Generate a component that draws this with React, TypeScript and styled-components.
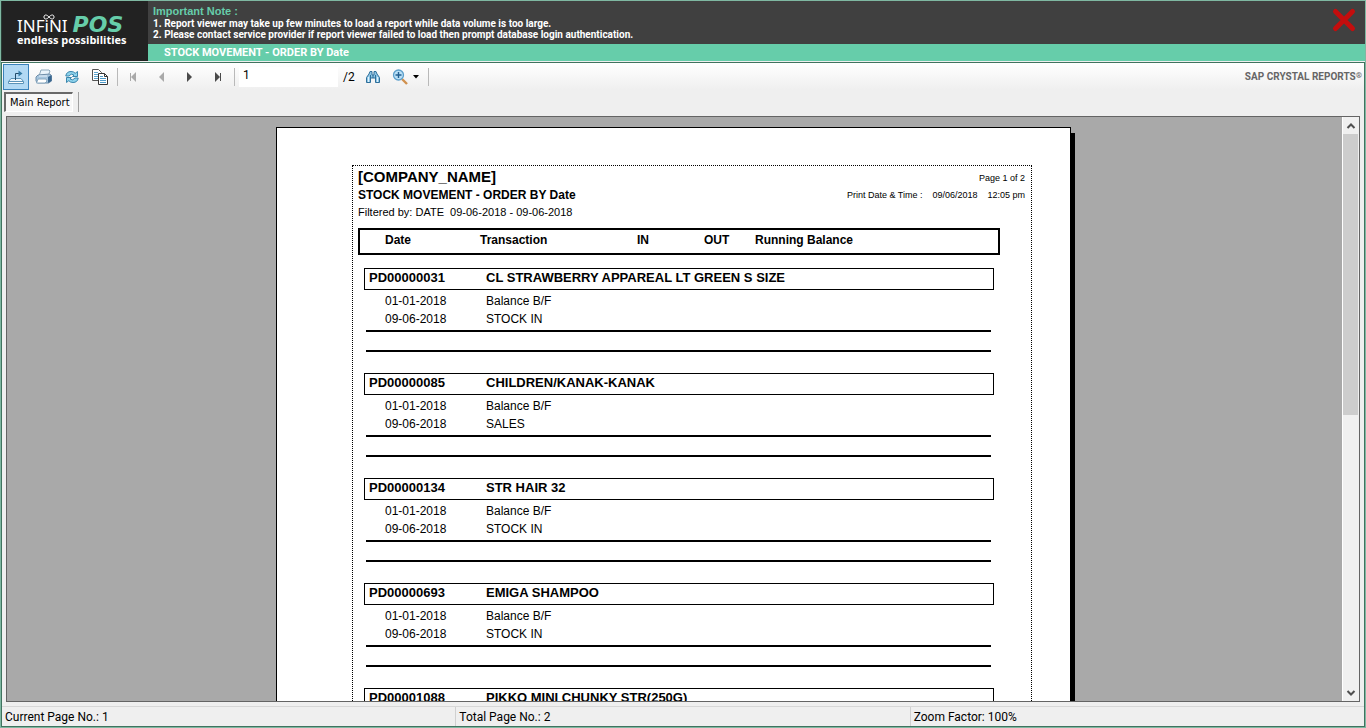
import React from "react";
import styled, { createGlobalStyle } from "styled-components";

const GlobalStyle = createGlobalStyle`
  *, *::before, *::after { box-sizing: border-box; }
  html, body, #root { height: 100%; }
  body { margin: 0; overflow: hidden; }
  button { font: inherit; }
`;

const sans = `"Liberation Sans", Arial, sans-serif`;
const uiFont = `Roboto, "Segoe UI", sans-serif`;

const Window = styled.div`
  display: flex;
  flex-direction: column;
  height: 100vh;
  background: #efefef;
  border: 1px solid #7fb8a2;
  color: #000;
  font-family: ${sans};
`;

/* ---------- banner ---------- */

const Banner = styled.header`
  display: flex;
  height: 60px;
  flex: none;
  background: #404040;
  border-left: 1px solid #2a3d36;
`;

const Logo = styled.div`
  width: 146px;
  flex: none;
  background: #222;
  color: #fff;
  padding: 15px 0 0 15px;
`;

const LogoTop = styled.div`
  position: relative;
  display: flex;
  align-items: baseline;
  gap: 5px;
  height: 17px;
`;

const LogoName = styled.span`
  font: 17px/17px "Noto Sans", sans-serif;
`;

const LogoPos = styled.span`
  font: italic bold 22px/17px "DejaVu Sans", sans-serif;
  color: #66cdaa;
`;

const LogoLoop = styled.svg`
  position: absolute;
  left: 26px;
  top: -2px;
`;

const LogoTag = styled.div`
  font: bold 11px/13px "Open Sans", sans-serif;
`;

const BannerBody = styled.div`
  flex: 1;
  display: flex;
  flex-direction: column;
  color: #fff;
`;

const Notes = styled.div`
  flex: 1;
  position: relative;
  padding: 4px 5px 0;
`;

const NoteTitle = styled.h2`
  margin: 0;
  font: bold 11px/13px ${sans};
  color: #66cdaa;
`;

const NoteList = styled.ol`
  margin: 0;
  padding: 0;
  list-style-position: inside;
  font: bold 10px/11px ${uiFont};
`;

const CloseButton = styled.button`
  position: absolute;
  top: 5px;
  right: 7px;
  width: 28px;
  height: 28px;
  padding: 0;
  border: 0;
  background: none;
`;

const ReportTitle = styled.h1`
  margin: 0;
  padding-left: 16px;
  height: 17px;
  background: #66cdaa;
  font: bold 11px/18px ${uiFont};
`;

/* ---------- toolbar ---------- */

const Shell = styled.main`
  flex: 1;
  min-height: 0;
  display: flex;
  flex-direction: column;
  margin-top: 1px;
  border: 1px solid #40735f;
`;

const Toolbar = styled.div`
  display: flex;
  align-items: center;
  gap: 2px;
  flex: none;
  height: 27px;
  padding: 0 2px 0 1px;
  background: linear-gradient(#fff, #efefef);
`;

const ToolButton = styled.button<{ $active?: boolean; $wide?: boolean }>`
  display: flex;
  align-items: center;
  justify-content: center;
  gap: 5px;
  width: ${(p) => (p.$wide ? 36 : 26)}px;
  height: 26px;
  padding: 0;
  border: 1px solid ${(p) => (p.$active ? "#3a82bb" : "transparent")};
  background: ${(p) => (p.$active ? "#b2d9f4" : "transparent")};
  svg { display: block; flex: none; }
`;

const Separator = styled.span`
  width: 1px;
  height: 18px;
  margin-left: 2px;
  background: #b9b9b9;
`;

const PageBox = styled.label`
  display: flex;
  align-items: center;
  gap: 5px;
  margin: 0 3px 0 2px;
  font: 12px/20px ${uiFont};
`;

const PageInput = styled.input`
  width: 99px;
  height: 20px;
  padding: 0 4px 3px;
  border: 0;
  background: #fff;
  font: 12px/16px ${uiFont};
`;

const Brand = styled.span`
  margin-left: auto;
  font: bold 10px/16px ${uiFont};
  color: #666;
  sup { font-size: 8px; line-height: 8px; vertical-align: 2px; }
`;

const Tabs = styled.div`
  display: flex;
  align-items: center;
  gap: 5px;
  flex: none;
  height: 26px;
  padding: 2px 0 4px 2px;
`;

const Tab = styled.button`
  height: 20px;
  width: 69px;
  padding: 0 0 0 4px;
  border: 1px solid;
  border-width: 2px 1px 1px 2px;
  border-color: #696969 #fff #fff #696969;
  background: #f7f7f7;
  font: 11px/16px "DejaVu Sans Condensed", "DejaVu Sans", sans-serif;
  text-align: left;
  white-space: nowrap;
`;

const TabRule = styled.span`
  width: 1px;
  height: 20px;
  background: #a0a0a0;
`;

/* ---------- report canvas ---------- */

const Viewer = styled.div`
  flex: 1;
  min-height: 0;
  display: flex;
  margin: 0 4px;
  border: 1px solid #646464;
  background: #a9a9a9;
`;

const Canvas = styled.div`
  flex: 1;
  min-width: 0;
  overflow: hidden;
  padding: 10px 2px 0 0;
`;

const Paper = styled.article`
  width: 795px;
  margin: 0 auto;
  padding: 37px 38px 37px 75px;
  border: 1px solid #000;
  background: #fff;
  box-shadow: 4px 6px 0 #000;
`;

const PrintArea = styled.div`
  min-height: 1000px;
  padding: 2px 5px;
  border: 1px dotted #000;
`;

const ReportHead = styled.div`
  display: flex;
  justify-content: space-between;
  height: 60px;
`;

const Company = styled.h3`
  margin: 0;
  font: bold 15px/18px ${sans};
`;

const HeadTitle = styled.p`
  margin: 0;
  font: bold 12px/18px ${sans};
`;

const Filter = styled.p`
  margin: 0;
  font: 11px/17px ${sans};
  white-space: pre;
`;

const PrintInfo = styled.div`
  padding: 2px 1px 0 0;
  font: 9px/17px ${sans};
  text-align: right;
`;

const PrintStamp = styled.div`
  display: flex;
  gap: 10px;
`;

const Report = styled.table`
  display: block;
  width: 642px;
  border-collapse: collapse;
  font-family: ${sans};
  thead, tbody { display: block; }
  th, td { padding: 0; text-align: left; }
`;

const HeaderRow = styled.tr`
  display: grid;
  grid-template-columns: 95px 157px 67px 51px 1fr;
  height: 27px;
  padding-left: 25px;
  margin-bottom: 13px;
  border: 2px solid #000;
  font: 12px/20px ${sans};
`;

const Group = styled.tbody`
  margin: 0 6px 21px;
`;

const ItemRow = styled.tr`
  display: grid;
  grid-template-columns: 117px 1fr;
  height: 22px;
  padding-left: 4px;
  margin-bottom: 2px;
  border: 1px solid #000;
  font: 13px/18px ${sans};
`;

const EntryRow = styled.tr`
  display: grid;
  grid-template-columns: 101px 1fr;
  height: 18px;
  padding-left: 21px;
  font: 12px/18px ${sans};
`;

const TotalRow = styled.tr`
  display: block;
  height: 22px;
  margin: 2px 3px 0 2px;
  border: solid #000;
  border-width: 2px 0;
`;

/* ---------- scrollbar and status ---------- */

const ScrollTrack = styled.div`
  display: flex;
  flex-direction: column;
  width: 17px;
  flex: none;
  border-left: 1px solid #fff;
  background: #f0f0f0;
`;

const ScrollButton = styled.button`
  display: grid;
  place-items: center;
  height: 17px;
  flex: none;
  padding: 0;
  border: 0;
  background: none;
`;

const ScrollRun = styled.div`
  flex: 1;
`;

const Thumb = styled.div`
  height: 51%;
  margin-right: 1px;
  background: #cdcdcd;
`;

const StatusBar = styled.footer`
  display: flex;
  flex: none;
  height: 20px;
  margin-top: 4px;
  border-top: 1px solid #d7d7d7;
`;

const StatusCell = styled.span`
  flex: 1;
  padding-left: 3px;
  font: 12px/20px ${uiFont};
  & + & { border-left: 1px solid #d0d0d0; }
`;

/* ---------- icons ---------- */

const ExportIcon = () => (
  <svg width="18" height="16" viewBox="0 0 18 16" fill="none">
    <path d="M4 9.500h10l2.500 3H1.500z" fill="#eaf5fc" stroke="#5b93b8" />
    <path d="M1.500 12.500h15v2h-15z" fill="#fff" stroke="#5b93b8" />
    <path d="M8.500 11V4.500h4" stroke="#234a68" />
    <path d="M11.500 1.500l4 3-4 3z" fill="#347aa5" />
  </svg>
);

const PrinterIcon = () => (
  <svg width="18" height="16" viewBox="0 0 18 16">
    <path d="M6 1h8l1 1-2 5H4z" fill="#eaf4fb" stroke="#8ba7bb" />
    <path d="M3 6l12-1 1.500 2v5l-3 2H2.500L1 12V8z" fill="#a6c5de" stroke="#6f8ea9" />
    <path d="M13 8l3.500-2v6L13 14z" fill="#38668f" />
    <path d="M3 10h8l1 2-2 2H1.500z" fill="#fff" stroke="#88a8c0" />
    <path d="M4 7h8" stroke="#e9f3fa" />
  </svg>
);

const RefreshIcon = () => (
  <svg width="14" height="14" viewBox="0 0 14 14" fill="#8ed3ec" stroke="#3a86ad">
    <path d="M.8 6Q1.500 1.500 6 1.500q2.800 0 4.200 1.800L12.500 1.500v5h-5L9 5Q6 2.800 4 6z" />
    <path d="M13.200 8Q12.500 12.500 8 12.500q-2.800 0-4.200-1.800L1.500 12.500v-5h5L5 9q3 2.200 5-1z" />
  </svg>
);

const CopyIcon = () => (
  <svg width="18" height="18" viewBox="0 0 18 18">
    <path d="M1.500 1.500h6l3 3v8h-9z" fill="#fff" stroke="#555" />
    <path d="M3 4.500h4M3 6.500h5M3 8.500h5M3 10.500h4" stroke="#5da5cf" />
    <path d="M7.500 5.500h6l3 3v8h-9z" fill="#fff" stroke="#333" />
    <path d="M13.500 5.500v3h3" fill="none" stroke="#333" />
    <path d="M9 8.500h3M9 10.500h6M9 12.500h6M9 14.500h6" stroke="#4e9ac8" />
  </svg>
);

const NavIcon = ({ back, edge }: { back?: boolean; edge?: boolean }) => (
  <svg width="10" height="10" viewBox="0 0 10 10" fill={back ? "#a9a9a9" : "#4a4a4a"}>
    {back ? <path d="M8 0v10L3 5z" /> : <path d="M3 0v10l5-5z" />}
    {edge && <path d={back ? "M2 1h1v8H2z" : "M8 1h1v8H8z"} />}
  </svg>
);

const FindIcon = () => (
  <svg width="16" height="14" viewBox="0 0 16 14" fill="#8fc6e6" stroke="#2f6f9a">
    <path d="M4 4L5 1.500h2V5h2V1.500h2L12 4l2.500 3.500v5h-4V8h-5v4.500h-4v-5z" />
    <path d="M3.500 7v5M12.500 7v5" stroke="#e2f2fb" />
    <path d="M5.500 5v4M10.500 5v4M8 5v3" />
  </svg>
);

const ZoomIcon = () => (
  <svg width="16" height="16" viewBox="0 0 16 16" fill="none">
    <path d="M10 10l5 5" stroke="#d0914f" strokeWidth="2.400" />
    <circle cx="6.500" cy="6" r="5" fill="#b9e0f7" stroke="#5d9fcb" strokeWidth="1.300" />
    <path d="M6.500 3v6M3.500 6h6" stroke="#225f91" strokeWidth="1.400" />
  </svg>
);

const Chevron = ({ up }: { up?: boolean }) => (
  <svg width="10" height="8" viewBox="0 0 10 8" fill="none" stroke="#505050" strokeWidth="2">
    <path d={up ? "M1.500 6L5 2.500 8.500 6" : "M1.500 2L5 5.500 8.500 2"} />
  </svg>
);

/* ---------- data ---------- */

type Entry = [date: string, label: string];

const entriesFor = (move: string): Entry[] => [
  ["01-01-2018", "Balance B/F"],
  ["09-06-2018", move],
];

const groups: { code: string; name: string; entries: Entry[] }[] = [
  { code: "PD00000031", name: "CL STRAWBERRY APPAREAL LT GREEN S SIZE", entries: entriesFor("STOCK IN") },
  { code: "PD00000085", name: "CHILDREN/KANAK-KANAK", entries: entriesFor("SALES") },
  { code: "PD00000134", name: "STR HAIR 32", entries: entriesFor("STOCK IN") },
  { code: "PD00000693", name: "EMIGA SHAMPOO", entries: entriesFor("STOCK IN") },
  { code: "PD00001088", name: "PIKKO MINI CHUNKY STR(250G)", entries: [] },
];

export default function App() {
  return (
    <Window>
      <GlobalStyle />
      <Banner>
        <Logo>
          <LogoTop>
            <LogoName>INFiNI</LogoName>
            <LogoPos>POS</LogoPos>
            <LogoLoop width="12" height="6" viewBox="0 0 12 6" fill="none" stroke="#fff">
              <path d="M6 3C4 .5 1 .2 1 3s3 2.500 5 0 5-2.800 5 0-3 2.500-5 0z" />
            </LogoLoop>
          </LogoTop>
          <LogoTag>endless possibilities</LogoTag>
        </Logo>
        <BannerBody>
          <Notes>
            <NoteTitle>Important Note :</NoteTitle>
            <NoteList>
              <li>Report viewer may take up few minutes to load a report while data volume is too large.</li>
              <li>Please contact service provider if report viewer failed to load then prompt database login authentication.</li>
            </NoteList>
            <CloseButton aria-label="Close">
              <svg width="28" height="28" viewBox="0 0 28 28" stroke="#c40d0d" strokeWidth="5" strokeLinecap="round">
                <path d="M5.500 5.500l17 17M22.500 5.500l-17 17" />
              </svg>
            </CloseButton>
          </Notes>
          <ReportTitle>STOCK MOVEMENT - ORDER BY Date</ReportTitle>
        </BannerBody>
      </Banner>

      <Shell>
        <Toolbar>
          <ToolButton $active aria-label="Export report"><ExportIcon /></ToolButton>
          <ToolButton aria-label="Print report"><PrinterIcon /></ToolButton>
          <ToolButton aria-label="Refresh"><RefreshIcon /></ToolButton>
          <ToolButton aria-label="Copy"><CopyIcon /></ToolButton>
          <Separator />
          <ToolButton aria-label="First page"><NavIcon back edge /></ToolButton>
          <ToolButton aria-label="Previous page"><NavIcon back /></ToolButton>
          <ToolButton aria-label="Next page"><NavIcon /></ToolButton>
          <ToolButton aria-label="Last page"><NavIcon edge /></ToolButton>
          <Separator />
          <PageBox>
            <PageInput aria-label="Page number" defaultValue="1" />
            /2
          </PageBox>
          <ToolButton aria-label="Find text"><FindIcon /></ToolButton>
          <ToolButton $wide aria-label="Zoom">
            <ZoomIcon />
            <svg width="6" height="4" viewBox="0 0 6 4"><path d="M0 0h6L3 3.500z" /></svg>
          </ToolButton>
          <Separator />
          <Brand>SAP CRYSTAL REPORTS<sup>®</sup></Brand>
        </Toolbar>
        <Tabs>
          <Tab>Main Report</Tab>
          <TabRule />
        </Tabs>

        <Viewer>
          <Canvas>
            <Paper>
              <PrintArea>
                <ReportHead>
                  <div>
                    <Company>[COMPANY_NAME]</Company>
                    <HeadTitle>STOCK MOVEMENT - ORDER BY Date</HeadTitle>
                    <Filter>Filtered by: DATE  09-06-2018 - 09-06-2018</Filter>
                  </div>
                  <PrintInfo>
                    <div>Page 1 of 2</div>
                    <PrintStamp>
                      <span>Print Date &amp; Time :</span>
                      <span>09/06/2018</span>
                      <span>12:05 pm</span>
                    </PrintStamp>
                  </PrintInfo>
                </ReportHead>
                <Report>
                  <thead>
                    <HeaderRow>
                      <th>Date</th>
                      <th>Transaction</th>
                      <th>IN</th>
                      <th>OUT</th>
                      <th>Running Balance</th>
                    </HeaderRow>
                  </thead>
                  {groups.map((g) => (
                    <Group key={g.code}>
                      <ItemRow>
                        <th>{g.code}</th>
                        <th>{g.name}</th>
                      </ItemRow>
                      {g.entries.map(([date, label]) => (
                        <EntryRow key={date}>
                          <td>{date}</td>
                          <td>{label}</td>
                        </EntryRow>
                      ))}
                      <TotalRow />
                    </Group>
                  ))}
                </Report>
              </PrintArea>
            </Paper>
          </Canvas>
          <ScrollTrack>
            <ScrollButton aria-label="Scroll up"><Chevron up /></ScrollButton>
            <ScrollRun><Thumb /></ScrollRun>
            <ScrollButton aria-label="Scroll down"><Chevron /></ScrollButton>
          </ScrollTrack>
        </Viewer>

        <StatusBar>
          <StatusCell>Current Page No.: 1</StatusCell>
          <StatusCell>Total Page No.: 2</StatusCell>
          <StatusCell>Zoom Factor: 100%</StatusCell>
        </StatusBar>
      </Shell>
    </Window>
  );
}
